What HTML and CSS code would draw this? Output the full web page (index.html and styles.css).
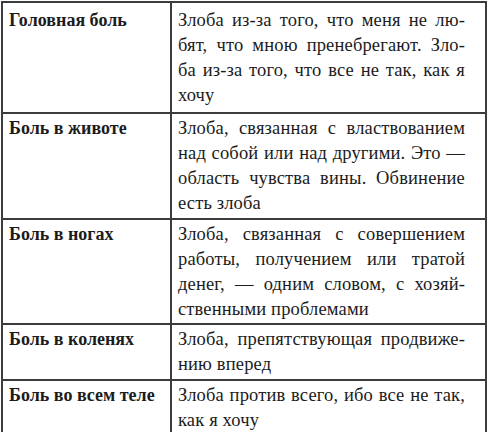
FILE: index.html
```html
<!DOCTYPE html>
<html lang="ru">
<head>
<meta charset="utf-8">
<title>Боль и злоба</title>
<link rel="stylesheet" href="styles.css">
</head>
<body>
<table class="tbl">
  <tr class="r1">
    <th>Головная боль</th>
    <td><span class="j">Злоба из-за того, что меня не лю-</span><span class="j">бят, что мною пренебрегают. Зло-</span><span class="j">ба из-за того, что все не так, как я</span><span class="l">хочу</span></td>
  </tr>
  <tr>
    <th>Боль в животе</th>
    <td><span class="j">Злоба, связанная с властвованием</span><span class="j">над собой или над другими. Это —</span><span class="j">область чувства вины. Обвинение</span><span class="l">есть злоба</span></td>
  </tr>
  <tr class="tight">
    <th>Боль в ногах</th>
    <td><span class="j">Злоба, связанная с совершением</span><span class="j">работы, получением или тратой</span><span class="j">денег, — одним словом, с хозяй-</span><span class="l">ственными проблемами</span></td>
  </tr>
  <tr>
    <th>Боль в коленях</th>
    <td><span class="j">Злоба, препятствующая продвиже-</span><span class="l">нию вперед</span></td>
  </tr>
  <tr class="tight">
    <th>Боль во всем теле</th>
    <td><span class="j">Злоба против всего, ибо все не так,</span><span class="l">как я хочу</span></td>
  </tr>
</table>
</body>
</html>
```

FILE: styles.css
```css
html, body {
  margin: 0;
  padding: 0;
  background: #ffffff;
}
body {
  padding: 1px 0 0 1px;
  font-family: "Liberation Serif", serif;
  font-size: 18px;
  line-height: 25px;
  color: #1c1c1c;
}
.tbl {
  border-collapse: collapse;
  width: 486px;
}
.tbl th,
.tbl td {
  border: 2px solid #3c3c3c;
  vertical-align: top;
  padding: 2px 6px 2px 6px;
  font-family: "Liberation Serif", serif;
}
.tbl th {
  width: 155px;
  text-align: left;
  font-weight: bold;
  font-size: 18px;
}
.tbl td {
  padding-right: 20px;
  font-size: 18.5px;
  letter-spacing: 0.15px;
}
.tbl .r1 th,
.tbl .r1 td {
  padding-top: 5px;
  padding-bottom: 4px;
}
.tbl .tight th,
.tbl .tight td {
  padding-bottom: 1px;
}
.j {
  display: block;
  text-align: justify;
  text-align-last: justify;
}
.l {
  display: block;
  text-align: left;
  white-space: nowrap;
}
```
